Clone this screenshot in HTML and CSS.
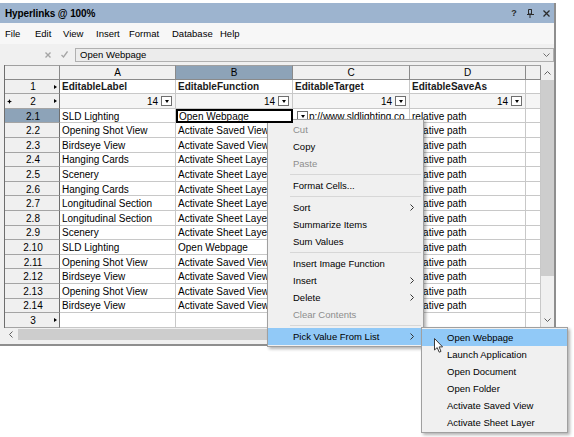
FILE: index.html
```html
<!DOCTYPE html>
<html>
<head>
<meta charset="utf-8">
<title>Hyperlinks</title>
<link rel="stylesheet" href="styles.css">
</head>
<body>
<div class="window">
  <div class="titlebar">
    <span class="title">Hyperlinks @ 100%</span>
    <div class="tb-icons">
      <span class="tb-icon help">?</span>
      <span class="tb-icon"><svg width="7" height="9" viewBox="0 0 7 9"><path d="M1.5 0.5h3v4.5h-3z M4.5 0.5v4.5 M0 5.5h7 M3 5.5v3.5" stroke="#2b2b2b" fill="none" stroke-width="1"/></svg></span>
      <span class="tb-icon"><svg width="7" height="7" viewBox="0 0 7 7"><path d="M0.5 0.5L6.5 6.5M6.5 0.5L0.5 6.5" stroke="#2b2b2b" stroke-width="1.3"/></svg></span>
    </div>
  </div>
  <div class="menubar">
    <span>File</span><span>Edit</span><span>View</span><span>Insert</span><span>Format</span><span>Database</span><span>Help</span>
  </div>
  <div class="formulabar">
    <svg class="fx" width="6" height="6" viewBox="0 0 6 6"><path d="M0.5 0.5L5.5 5.5M5.5 0.5L0.5 5.5" stroke="#a5a5a5" stroke-width="1.4"/></svg>
    <svg class="fchk" width="7" height="7" viewBox="0 0 7 7"><path d="M0.5 4L2.5 6L6.5 0.5" stroke="#a5a5a5" stroke-width="1.3" fill="none"/></svg>
    <div class="fbox"><span>Open Webpage</span><svg width="7" height="4" viewBox="0 0 7 4"><path d="M0.5 0.5L3.5 3.5L6.5 0.5" stroke="#707070" fill="none"/></svg></div>
  </div>
  <div class="content">
    <div class="sheet">
      <div class="grid">
        <div class="ch"></div><div class="ch">A</div><div class="ch sel">B</div><div class="ch">C</div><div class="ch">D</div><div class="ch"></div>

        <div class="rh"><span></span><span>1</span><span class="mr"><b class="tri"></b></span></div>
        <div class="c b">EditableLabel</div><div class="c b">EditableFunction</div><div class="c b">EditableTarget</div><div class="c b">EditableSaveAs</div><div class="c"></div>

        <div class="rh"><span class="ml"><svg width="5" height="5" viewBox="0 0 5 5"><path d="M2.5 0L3.2 1.8L5 2.5L3.2 3.2L2.5 5L1.8 3.2L0 2.5L1.8 1.8Z" fill="#000"/></svg></span><span>2</span><span class="mr"><b class="tri"></b></span></div>
        <div class="c f"><span>14</span><span class="dd"></span></div><div class="c f"><span>14</span><span class="dd"></span></div><div class="c f"><span>14</span><span class="dd"></span></div><div class="c f"><span>14</span><span class="dd"></span></div><div class="c f"></div>

        <div class="rh sel"><span></span><span>2.1</span><span></span></div>
        <div class="c">SLD Lighting</div><div class="c cur">Open Webpage</div><div class="c"><span class="dd tall"></span><span class="url">p://www.sldlighting.co</span></div><div class="c">relative path</div><div class="c"></div>

        <div class="rh"><span></span><span>2.2</span><span></span></div>
        <div class="c">Opening Shot View</div><div class="c">Activate Saved View</div><div class="c"></div><div class="c">relative path</div><div class="c"></div>

        <div class="rh"><span></span><span>2.3</span><span></span></div>
        <div class="c">Birdseye View</div><div class="c">Activate Saved View</div><div class="c"></div><div class="c">relative path</div><div class="c"></div>

        <div class="rh"><span></span><span>2.4</span><span></span></div>
        <div class="c">Hanging Cards</div><div class="c">Activate Sheet Layer</div><div class="c"></div><div class="c">relative path</div><div class="c"></div>

        <div class="rh"><span></span><span>2.5</span><span></span></div>
        <div class="c">Scenery</div><div class="c">Activate Sheet Layer</div><div class="c"></div><div class="c">relative path</div><div class="c"></div>

        <div class="rh"><span></span><span>2.6</span><span></span></div>
        <div class="c">Hanging Cards</div><div class="c">Activate Sheet Layer</div><div class="c"></div><div class="c">relative path</div><div class="c"></div>

        <div class="rh"><span></span><span>2.7</span><span></span></div>
        <div class="c">Longitudinal Section</div><div class="c">Activate Sheet Layer</div><div class="c"></div><div class="c">relative path</div><div class="c"></div>

        <div class="rh"><span></span><span>2.8</span><span></span></div>
        <div class="c">Longitudinal Section</div><div class="c">Activate Sheet Layer</div><div class="c"></div><div class="c">relative path</div><div class="c"></div>

        <div class="rh"><span></span><span>2.9</span><span></span></div>
        <div class="c">Scenery</div><div class="c">Activate Sheet Layer</div><div class="c"></div><div class="c">relative path</div><div class="c"></div>

        <div class="rh"><span></span><span>2.10</span><span></span></div>
        <div class="c">SLD Lighting</div><div class="c">Open Webpage</div><div class="c"></div><div class="c">relative path</div><div class="c"></div>

        <div class="rh"><span></span><span>2.11</span><span></span></div>
        <div class="c">Opening Shot View</div><div class="c">Activate Saved View</div><div class="c"></div><div class="c">relative path</div><div class="c"></div>

        <div class="rh"><span></span><span>2.12</span><span></span></div>
        <div class="c">Birdseye View</div><div class="c">Activate Saved View</div><div class="c"></div><div class="c">relative path</div><div class="c"></div>

        <div class="rh"><span></span><span>2.13</span><span></span></div>
        <div class="c">Opening Shot View</div><div class="c">Activate Saved View</div><div class="c"></div><div class="c">relative path</div><div class="c"></div>

        <div class="rh"><span></span><span>2.14</span><span></span></div>
        <div class="c">Birdseye View</div><div class="c">Activate Saved View</div><div class="c"></div><div class="c">relative path</div><div class="c"></div>

        <div class="rh"><span></span><span>3</span><span class="mr"><b class="tri"></b></span></div>
        <div class="c"></div><div class="c"></div><div class="c"></div><div class="c"></div><div class="c"></div>
      </div>
      <div class="hscroll">
        <div class="harrow"><svg width="4" height="7" viewBox="0 0 4 7"><path d="M3.5 0.5L0.5 3.5L3.5 6.5" stroke="#606060" fill="none"/></svg></div>
        <div class="hthumb"></div>
        <div class="htrack"></div>
      </div>
    </div>
    <div class="vscroll">
      <div class="varrow"><svg width="7" height="4" viewBox="0 0 7 4"><path d="M0.5 3.5L3.5 0.5L6.5 3.5" stroke="#606060" fill="none"/></svg></div>
      <div class="vthumb"></div>
      <div class="vtrack"></div>
      <div class="varrow"><svg width="7" height="4" viewBox="0 0 7 4"><path d="M0.5 0.5L3.5 3.5L6.5 0.5" stroke="#606060" fill="none"/></svg></div>
      <div class="corner"></div>
    </div>
  </div>
</div>

<div class="menu ctx">
  <div class="mi dis">Cut</div>
  <div class="mi">Copy</div>
  <div class="mi dis">Paste</div>
  <div class="sep"></div>
  <div class="mi">Format Cells...</div>
  <div class="sep"></div>
  <div class="mi">Sort<svg class="arr" width="4" height="7" viewBox="0 0 4 7"><path d="M0.5 0.5L3.5 3.5L0.5 6.5" stroke="#333" fill="none"/></svg></div>
  <div class="mi">Summarize Items</div>
  <div class="mi">Sum Values</div>
  <div class="sep"></div>
  <div class="mi">Insert Image Function</div>
  <div class="mi">Insert<svg class="arr" width="4" height="7" viewBox="0 0 4 7"><path d="M0.5 0.5L3.5 3.5L0.5 6.5" stroke="#333" fill="none"/></svg></div>
  <div class="mi">Delete<svg class="arr" width="4" height="7" viewBox="0 0 4 7"><path d="M0.5 0.5L3.5 3.5L0.5 6.5" stroke="#333" fill="none"/></svg></div>
  <div class="mi dis">Clear Contents</div>
  <div class="sep"></div>
  <div class="mi hl">Pick Value From List<svg class="arr" width="4" height="7" viewBox="0 0 4 7"><path d="M0.5 0.5L3.5 3.5L0.5 6.5" stroke="#333" fill="none"/></svg></div>
</div>

<div class="menu sub">
  <div class="mi hl">Open Webpage</div>
  <div class="mi">Launch Application</div>
  <div class="mi">Open Document</div>
  <div class="mi">Open Folder</div>
  <div class="mi">Activate Saved View</div>
  <div class="mi">Activate Sheet Layer</div>
</div>

<svg class="cursor" width="10" height="15" viewBox="0 0 10 15"><path d="M0.5 0.5L0.5 12L3.2 9.6L5.2 14.2L7 13.4L5.1 8.9L8.6 8.9Z" fill="#fff" stroke="#3a3a3a" stroke-width="1" stroke-linejoin="round"/></svg>
</body>
</html>
```

FILE: styles.css
```css
* { box-sizing: border-box; }
html, body { margin: 0; padding: 0; background: #fff; }
body {
  font-family: "Liberation Sans", Arial, sans-serif;
  font-size: 10px;
  color: #000;
  position: relative;
  width: 574px;
  height: 437px;
  overflow: hidden;
}

.window {
  width: 556px;
  margin-top: 3px;
  background: #f0f0f0;
  border-right: 2px solid #8e8e8e;
  border-bottom: 2px solid #8e8e8e;
  display: flex;
  flex-direction: column;
}

.titlebar {
  height: 20px;
  background: #9db4cf;
  display: flex;
  align-items: center;
  padding-left: 5px;
}
.title { font-weight: bold; font-size: 10px; letter-spacing: -0.1px; }
.tb-icons { margin-left: auto; display: flex; }
.tb-icon {
  width: 16px;
  height: 20px;
  display: flex;
  align-items: center;
  justify-content: center;
}
.help { font-weight: bold; font-size: 9px; color: #2b2b2b; }

.menubar {
  height: 21px;
  background: #f7f7f7;
  display: flex;
  align-items: center;
  padding: 0 0 1px 5px;
  font-size: 9.5px;
}
.menubar span:nth-child(1) { width: 30px; }
.menubar span:nth-child(2) { width: 28px; }
.menubar span:nth-child(3) { width: 33px; }
.menubar span:nth-child(4) { width: 33px; }
.menubar span:nth-child(5) { width: 43px; }
.menubar span:nth-child(6) { width: 48px; }

.formulabar {
  height: 21px;
  display: flex;
  align-items: center;
  padding-left: 45px;
}
.fx { margin-right: 10px; }
.fchk { margin-right: 7px; }
.fbox {
  flex: 1;
  height: 14px;
  background: #ececec;
  border: 1px solid #b0b0b0;
  display: flex;
  align-items: center;
  justify-content: space-between;
  padding: 0 3px 0 4px;
  font-size: 9.5px;
}

.content { display: flex; padding: 0 0 3px 4px; }
.sheet { width: 537px; display: flex; flex-direction: column; }

.grid {
  display: grid;
  grid-template-columns: 55px 116px 117px 117px 116px 15px;
  grid-auto-rows: 14.6px;
  border-left: 1px solid #6e6e6e;
  background: #fff;
}
.grid > div {
  display: flex;
  align-items: center;
  overflow: hidden;
  white-space: nowrap;
  padding-top: 1px;
}

.ch {
  justify-content: center;
  background: #f0f0f0;
  border-top: 1px solid #a0a0a0;
  border-right: 1px solid #8a8a8a;
  border-bottom: 1px solid #8a8a8a;
}
.ch.sel { background: #8da3b8; }

.grid > .rh {
  display: grid;
  grid-template-columns: 10px 1fr 8px;
  align-items: center;
  background: #f0f0f0;
  border-right: 1px solid #6e6e6e;
  border-bottom: 1px solid #a4a4a4;
  text-align: center;
}
.grid > .rh.sel { background: #8da3b8; }
.rh .ml { display: flex; padding-left: 2px; }
.rh .mr { display: flex; justify-content: center; }
.tri {
  width: 0;
  height: 0;
  border-left: 3px solid #000;
  border-top: 2.5px solid transparent;
  border-bottom: 2.5px solid transparent;
}

.c {
  background: #fff;
  border-right: 1px solid #c8c8c8;
  border-bottom: 1px solid #c8c8c8;
  padding-left: 2px;
}
.c.b { font-weight: bold; color: #1a1a1a; }
.grid > .c.f {
  background: #f5f5f5;
  justify-content: flex-end;
  gap: 3px;
  padding-right: 3px;
}
.grid > .cur {
  position: relative;
  z-index: 1;
  outline: 2px solid #000;
  outline-offset: -2px;
  padding-left: 3px;
}

.dd {
  width: 11px;
  height: 10px;
  flex: none;
  background: #fff;
  border: 1px solid #6f6f6f;
  display: flex;
  align-items: center;
  justify-content: center;
}
.dd::after {
  content: "";
  width: 0;
  height: 0;
  border-top: 3px solid #000;
  border-left: 2.5px solid transparent;
  border-right: 2.5px solid transparent;
}
.dd.tall { height: 11px; width: 11px; margin-left: 2px; }
.url { margin-left: 1px; }

.hscroll { height: 13px; display: flex; background: #f0f0f0; }
.harrow { width: 13px; display: flex; align-items: center; justify-content: center; }
.hthumb { width: 420px; margin: 1px 0 1px 1px; background: #cdcdcd; }
.htrack { flex: 1; }

.vscroll { width: 13px; display: flex; flex-direction: column; background: #f0f0f0; }
.varrow { height: 15px; flex: none; display: flex; align-items: center; justify-content: center; }
.vthumb { height: 196px; flex: none; background: #cdcdcd; }
.vtrack { flex: 1; }
.corner { height: 13px; flex: none; }

.menu {
  position: absolute;
  background: #f0f0f0;
  border: 1px solid #a0a0a0;
  padding: 1px 0;
  box-shadow: 2px 2px 3px rgba(0, 0, 0, 0.3);
  font-size: 9.5px;
}
.ctx { left: 267px; top: 119px; width: 157px; }
.sub { left: 421px; top: 327px; width: 147px; }
.mi {
  height: 17px;
  display: flex;
  align-items: center;
  justify-content: space-between;
  padding: 0 9px 0 25px;
  white-space: nowrap;
}
.mi.dis { color: #8d8d8d; }
.mi.hl { background: #91c9f7; }
.sep { height: 1px; background: #d7d7d7; margin: 2px 2px 2px 22px; }

.cursor { position: absolute; left: 433.5px; top: 338px; }
```
